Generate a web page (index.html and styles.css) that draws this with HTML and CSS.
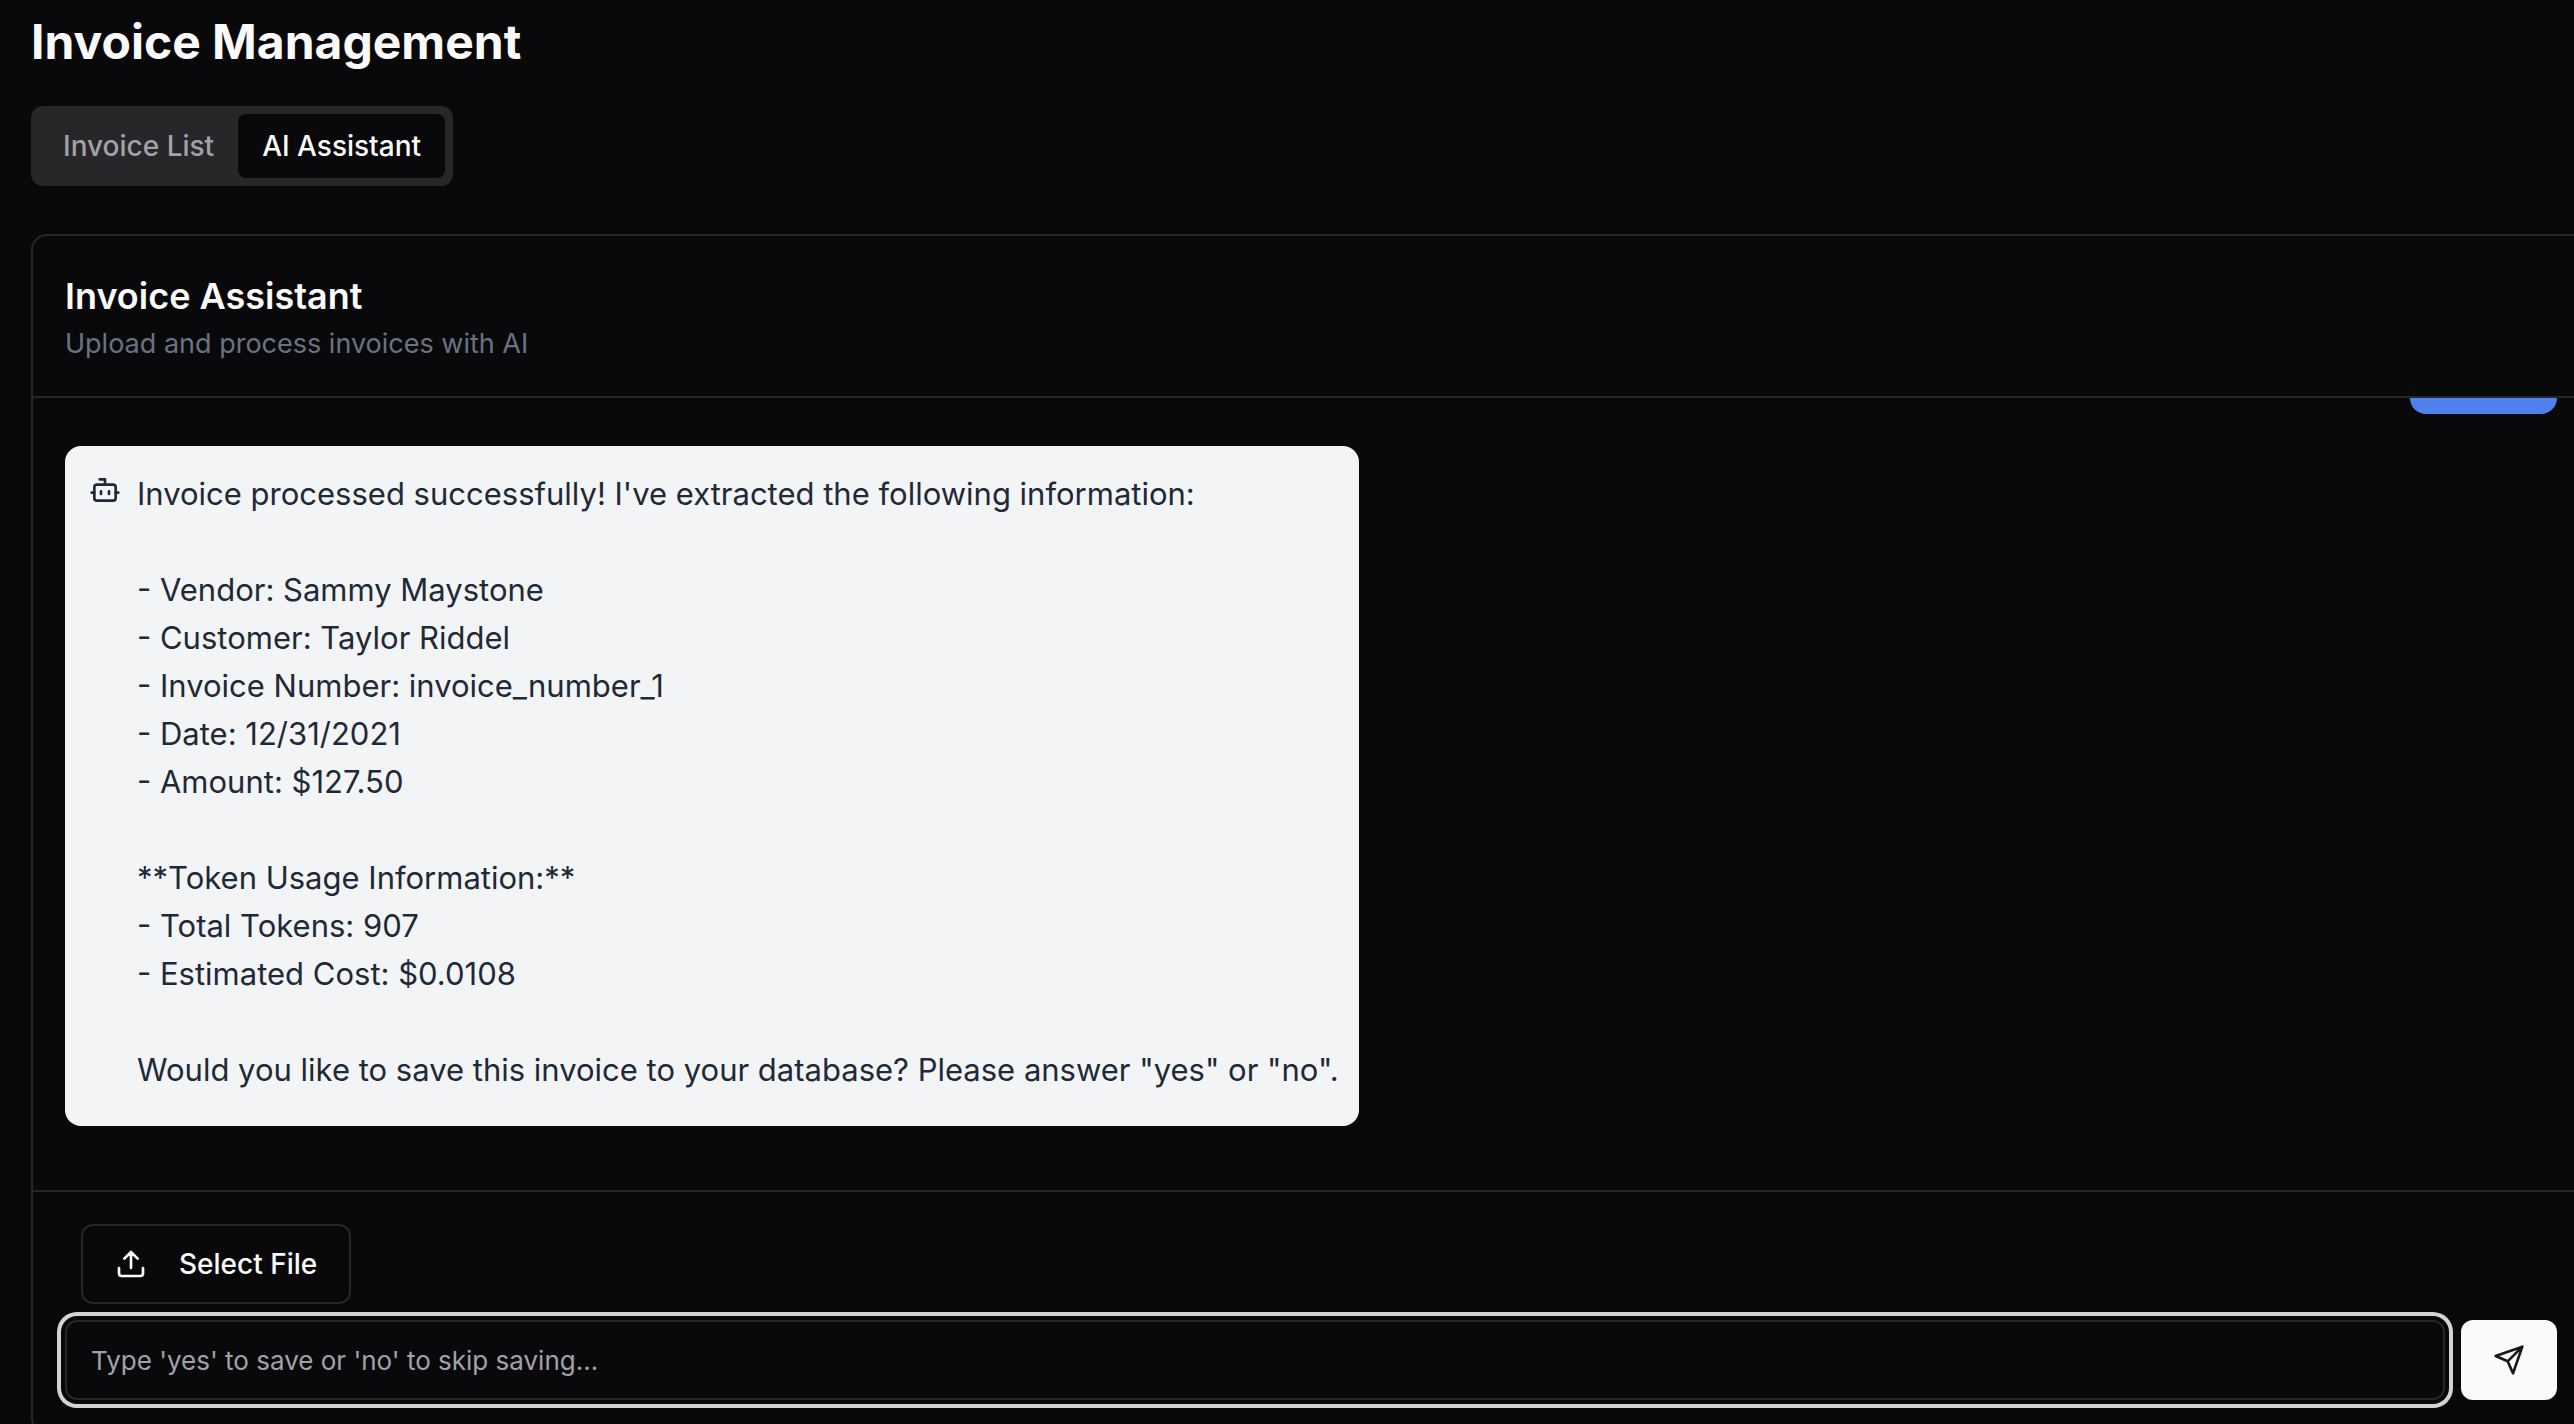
FILE: index.html
```html
<!DOCTYPE html>
<html lang="en">
<head>
<meta charset="utf-8">
<meta name="viewport" content="width=device-width, initial-scale=1">
<title>Invoice Management</title>
<link rel="stylesheet" href="styles.css">
</head>
<body>
<main class="page">
  <h1 class="page-title">Invoice Management</h1>

  <div class="tabs" role="tablist">
    <button class="tab" type="button" role="tab" aria-selected="false">Invoice List</button>
    <button class="tab tab-active" type="button" role="tab" aria-selected="true">AI Assistant</button>
  </div>

  <section class="card">
    <header class="card-header">
      <h2 class="card-title">Invoice Assistant</h2>
      <p class="card-subtitle">Upload and process invoices with AI</p>
    </header>

    <div class="messages">
      <div class="bubble-user"></div>
      <article class="bubble-bot">
        <svg class="icon" viewBox="0 0 24 24" aria-hidden="true">
          <path d="M12 8V4H8"/>
          <rect width="16" height="12" x="4" y="8" rx="2"/>
          <path d="M2 14h2M20 14h2M15 13v2M9 13v2"/>
        </svg>
        <p class="bubble-text">Invoice processed successfully! I've extracted the following information:

- Vendor: Sammy Maystone
- Customer: Taylor Riddel
- Invoice Number: invoice_number_1
- Date: 12/31/2021
- Amount: $127.50

**Token Usage Information:**
- Total Tokens: 907
- Estimated Cost: $0.0108

Would you like to save this invoice to your database? Please answer "yes" or "no".</p>
      </article>
    </div>

    <form class="composer">
      <button class="file-button" type="button">
        <svg class="icon" viewBox="0 0 24 24" aria-hidden="true">
          <path d="M21 15v4a2 2 0 0 1-2 2H5a2 2 0 0 1-2-2v-4M17 8l-5-5-5 5M12 3v12"/>
        </svg>
        Select File
      </button>
      <div class="composer-row">
        <input class="reply" type="text" aria-label="Reply" placeholder="Type 'yes' to save or 'no' to skip saving...">
        <button class="send" type="submit" aria-label="Send">
          <svg class="icon" viewBox="0 0 24 24" aria-hidden="true">
            <path d="m22 2-7 20-4-9-9-4ZM22 2 11 13"/>
          </svg>
        </button>
      </div>
    </form>
  </section>
</main>
</body>
</html>
```
FILE: styles.css
```css
:root {
  --background: #09090b;
  --foreground: #fafafa;
  --border: #27272a;
  --muted: #a1a1aa;
}

* {
  box-sizing: border-box;
}

body {
  margin: 0;
  overflow: hidden;
  background: var(--background);
  color: var(--foreground);
  font-family: Inter, "Liberation Sans", sans-serif;
}

h1,
h2,
p {
  margin: 0;
}

button,
input {
  font-family: inherit;
}

.page {
  display: flex;
  flex-direction: column;
  align-items: flex-start;
  padding: 10px 0 32px 31px;
}

.page-title {
  margin-bottom: 32px;
  font-size: 48px;
  font-weight: 700;
  line-height: 64px;
}

.tabs {
  display: flex;
  margin-bottom: 48px;
  padding: 8px;
  border-radius: 12px;
  background: var(--border);
}

.tab {
  padding: 12px 24px;
  border: 0;
  border-radius: 8px;
  background: none;
  color: var(--muted);
  font-size: 28px;
  font-weight: 500;
  line-height: 40px;
}

.tab-active {
  background: var(--background);
  color: var(--foreground);
}

/* The card is wider than the viewport and runs off its right edge. */
.card {
  align-self: stretch;
  margin-right: -17px;
  border: 2px solid var(--border);
  border-radius: 16px;
}

.card-header {
  padding: 32px;
  border-bottom: 2px solid var(--border);
}

.card-title {
  font-size: 36px;
  font-weight: 600;
  line-height: 56px;
}

.card-subtitle {
  color: #6b7280;
  font-size: 27px;
  line-height: 40px;
}

.messages {
  display: flex;
  flex-direction: column;
  align-items: flex-start;
  gap: 32px;
  padding: 0 32px 64px;
}

/* Lower edge of the previous message, scrolled under the header. */
.bubble-user {
  align-self: flex-end;
  width: 147px;
  height: 16px;
  border-radius: 0 0 16px 16px;
  background: #4f82ee;
}

.bubble-bot {
  display: flex;
  gap: 16px;
  max-width: 80%;
  padding: 24px 20px 32px 24px;
  border-radius: 16px;
  background: #f3f4f6;
  color: #1f2937;
}

.bubble-bot .icon {
  margin-top: 4px;
}

.bubble-text {
  font-size: 31px;
  line-height: 48px;
  white-space: pre-line;
}

.icon {
  flex: none;
  width: 32px;
  height: 32px;
  fill: none;
  stroke: currentColor;
  stroke-width: 2;
  stroke-linecap: round;
  stroke-linejoin: round;
}

.composer {
  display: flex;
  flex-direction: column;
  align-items: flex-start;
  gap: 16px;
  padding: 32px;
  border-top: 2px solid var(--border);
}

.file-button {
  display: flex;
  align-items: center;
  gap: 32px;
  margin-left: 16px;
  padding: 18px 32px;
  border: 2px solid var(--border);
  border-radius: 12px;
  background: var(--background);
  color: var(--foreground);
  font-size: 28px;
  font-weight: 500;
  line-height: 40px;
}

.composer-row {
  display: flex;
  align-self: stretch;
  gap: 16px;
}

.reply {
  flex: 1;
  min-width: 0;
  height: 80px;
  padding: 0 24px;
  border: 2px solid var(--border);
  border-radius: 12px;
  outline: none;
  background: var(--background);
  box-shadow: 0 0 0 4px var(--background), 0 0 0 8px #d4d4d8;
  color: var(--foreground);
  font-size: 26px;
}

.reply::placeholder {
  color: var(--muted);
}

.send {
  display: flex;
  align-items: center;
  justify-content: center;
  width: 96px;
  height: 80px;
  padding: 0;
  border: 0;
  border-radius: 12px;
  background: var(--foreground);
  color: #18181b;
}
```
